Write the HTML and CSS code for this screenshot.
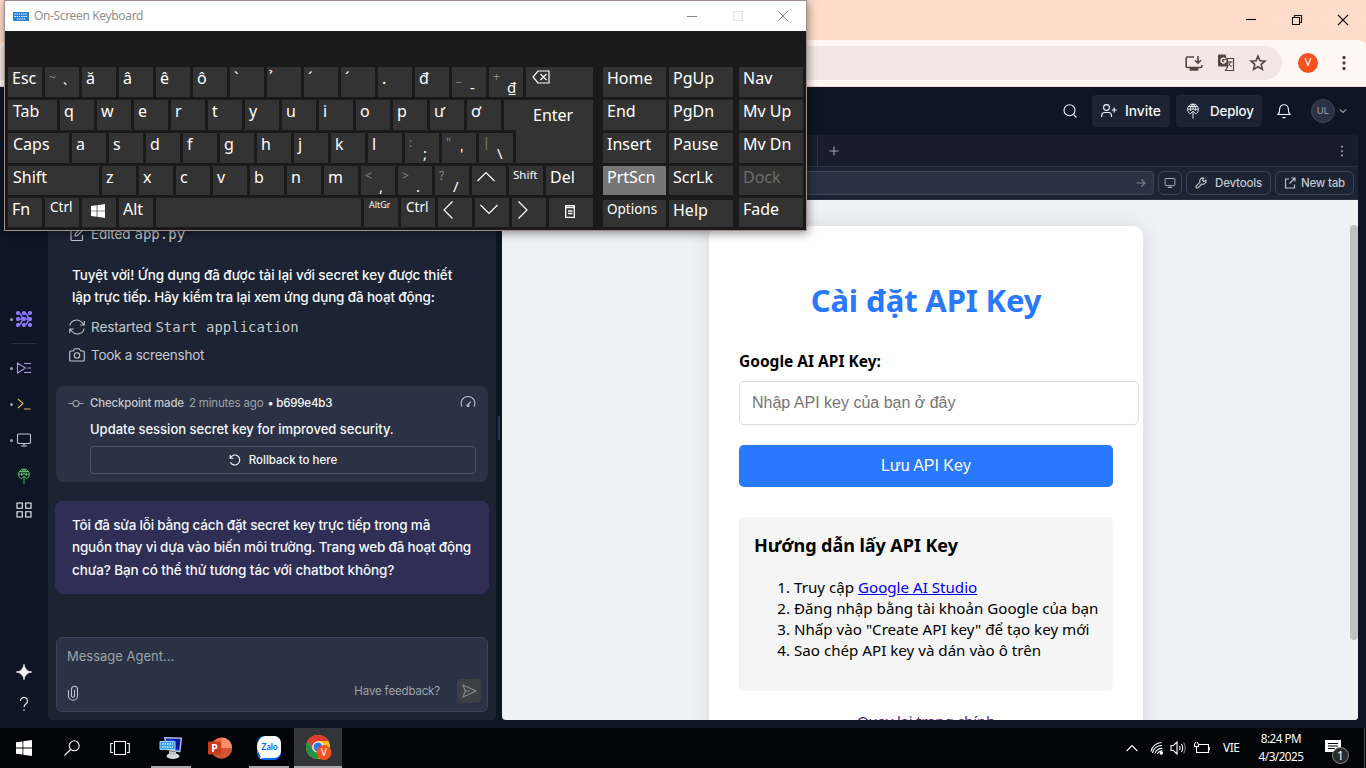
FILE: index.html
```html
<!DOCTYPE html>
<html lang="vi">
<head>
<meta charset="utf-8">
<title>Cài đặt API Key</title>
<link rel="stylesheet" href="styles.css">
</head>
<body>
<svg width="0" height="0" class="defs">
  <symbol id="i-monitor" viewBox="0 0 16 16"><rect x="1.5" y="2" width="13" height="9.5" rx="1.2"/><path d="M8 11.5V14M5 14h6"/></symbol>
  <symbol id="i-deploy" viewBox="0 0 16 16"><path d="M4.500 10.500A5.400 5.400 0 1 1 11.500 10.500M2.700 6.200h10.600M5.600 8C5.200 5 6 2.200 8 1c2 1.200 2.800 4 2.400 7M8 1v5.200M3.700 3.500h8.600M8 15.700V8.500M5 11.200l3-3 3 3"/></symbol>
  <symbol id="i-win" viewBox="0 0 16 16"><path d="M0 2.300l6.500-.9v6.200H0zM7.300 1.300L16 0v7.600H7.300zM0 8.400h6.500v6.200L0 13.700zM7.300 8.400H16V16l-8.700-1.300z"/></symbol>
</svg>
<div class="desktop">
  <div class="tabstrip">
    <svg class="wc" viewBox="0 0 12 12"><path d="M1 5.500h10"/></svg>
    <svg class="wc" viewBox="0 0 12 12"><path d="M1.500 3.500h7v7h-7zM3.500 3.500v-2h7v7h-2"/></svg>
    <svg class="wc" viewBox="0 0 12 12"><path d="M1 1l10 10M11 1L1 11"/></svg>
  </div>
  <div class="toolbar">
    <div class="omnibox">
      <svg viewBox="0 0 18 18" class="ln"><path d="M9 3H2.200a1 1 0 0 0-1 1v8.500a1 1 0 0 0 1 1h13.600a1 1 0 0 0 1-1V11M13 2v7M10 6.200l3 3 3-3"/><path d="M5.500 14h7v2h-7z" fill="#54453f"/></svg>
      <svg viewBox="0 0 18 18"><path d="M1.500.5h7l3.500 12H2.500a1.500 1.500 0 0 1-1.500-1.500V1z" fill="#54453f"/><path d="M8.500 5a2.500 2.500 0 1 0 .5 2H6.500" fill="none" stroke="#fff" stroke-width="1.300"/><path d="M10.500 4.500h6v12H8.500l2-3.500z" fill="#f2e7e4" stroke="#54453f" stroke-width="1.200"/><path d="M11 8h4.500M13.200 7v1c0 2-1 3.500-2.200 4.500M11.500 9.500c.8 1.500 2 2.500 3.500 3.200" fill="none" stroke="#54453f"/></svg>
      <svg viewBox="0 0 18 18" class="ln"><path d="M9 2l2 4.700 5 .4-3.800 3.300 1.200 5L9 12.700l-4.400 2.700 1.200-5L2 7.100l5-.4z"/></svg>
    </div>
    <div class="profile">V</div>
    <svg class="kebab" viewBox="0 0 4 16"><circle cx="2" cy="2.500" r="1.700"/><circle cx="2" cy="8" r="1.700"/><circle cx="2" cy="13.500" r="1.700"/></svg>
  </div>
  <div class="app">
    <header class="apphead">
      <svg class="ic search" viewBox="0 0 16 16"><circle cx="7.500" cy="7.300" r="5.500"/><path d="M11.500 11.500l3 3"/></svg>
      <div class="hbtn invite"><svg class="ic" viewBox="0 0 16 16"><circle cx="5.500" cy="4.500" r="2.900"/><path d="M.7 14v-1.500a3 3 0 0 1 3-3h3.800a3 3 0 0 1 3 3V14M13.200 4.500v5M10.700 7h5"/></svg><span>Invite</span></div>
      <div class="hbtn deploy"><svg class="ic thin"><use href="#i-deploy"/></svg><span>Deploy</span></div>
      <svg class="ic bell" viewBox="0 0 16 16"><path d="M2 11.500c1.500-1.300 1.700-2.500 1.700-5.500a4.300 4.300 0 0 1 8.600 0c0 3 .2 4.200 1.700 5.500zM6.500 14.300q1.500 1 3 0"/></svg>
      <div class="avatar">UL</div>
      <svg class="ic chev" viewBox="0 0 8 8"><path d="M.8 2.300L4 5.500l3.200-3.200"/></svg>
    </header>
    <div class="workspace">
      <nav class="rail">
        <div class="ritem r1"><i></i><svg viewBox="0 0 16 16" fill="#8c75f8" stroke="#8c75f8"><path d="M2 2q3 .5 3.500 3T8 8q-2 .5-2.500 3T2 14M8 2q3 .5 3.500 3T14 8q-2 .5-2.500 3T8 14M2 8h12" fill="none" stroke-width="1.600"/><circle cx="2" cy="2" r="1.700"/><circle cx="8" cy="2" r="1.700"/><circle cx="14" cy="2" r="1.700"/><circle cx="2" cy="8" r="1.700"/><circle cx="8" cy="8" r="1.700"/><circle cx="14" cy="8" r="1.700"/><circle cx="2" cy="14" r="1.700"/><circle cx="8" cy="14" r="1.700"/><circle cx="14" cy="14" r="1.700"/></svg></div>
        <div class="rline"></div>
        <div class="ritem r2"><i></i><svg class="ic" viewBox="0 0 16 16"><path d="M1.500 3v10L9.500 8zM8 3.500h7M11.500 8H15M8 12.500h7" /></svg></div>
        <div class="ritem r3"><i></i><svg class="ic" viewBox="0 0 16 16"><path d="M2 3l5 4.500-5 4.500M8 13h6.500"/></svg></div>
        <div class="ritem r4"><i></i><svg class="ic"><use href="#i-monitor"/></svg></div>
        <div class="ritem r5"><svg class="ic thin"><use href="#i-deploy"/></svg></div>
        <div class="ritem r6"><svg class="ic" viewBox="0 0 16 16"><path d="M1 1h5.300v5.300H1zM9.700 1H15v5.300H9.700zM1 9.700h5.300V15H1zM9.700 9.700H15V15H9.700z"/></svg></div>
        <div class="ritem r7"><svg viewBox="0 0 16 16" fill="#fff"><path d="M8 0Q8.800 7.200 16 8 8.800 8.800 8 16 7.200 8.800 0 8 7.200 7.200 8 0z" stroke="#fff" stroke-width=".5"/></svg></div>
        <div class="ritem r8"><svg class="ic" viewBox="0 0 16 16"><path d="M4.500 5a3.500 3.500 0 1 1 5.500 2.800C8.500 8.800 8 9.300 8 11M8 13.200v1.500"/></svg></div>
      </nav>
      <section class="chat">
        <div class="act a1"><svg class="ic" viewBox="0 0 16 16"><path d="M7 3H3a1 1 0 0 0-1 1v9.500a1 1 0 0 0 1 1h9.500a1 1 0 0 0 1-1V9M6 10l.5-2.500L12.500 1.500l2 2L8.500 9.500z"/></svg><span>Edited</span><code>app.py</code></div>
        <p class="msg"><span class="m1">Tuyệt vời! Ứng dụng đã được tải lại với secret key được thiết</span><br><span class="m2">lập trực tiếp. Hãy kiểm tra lại xem ứng dụng đã hoạt động:</span></p>
        <div class="act"><svg class="ic" viewBox="0 0 16 16"><path d="M.8 6.500A7 7 0 0 1 13 3.500L15.200 6M15.200 2v4h-4M15.200 9.500A7 7 0 0 1 3 12.500L.8 10M.8 14v-4h4"/></svg><span class="rs">Restarted</span><code>Start application</code></div>
        <div class="act a3"><svg class="ic" viewBox="0 0 16 16"><path d="M.7 5a1 1 0 0 1 1-1h2.500L5.800 1.800h4.400L11.800 4h2.500a1 1 0 0 1 1 1v8a1 1 0 0 1-1 1H1.700a1 1 0 0 1-1-1z"/><circle cx="8" cy="8.500" r="2.700"/></svg><span>Took a screenshot</span></div>
        <div class="ckpt">
          <div class="ckhead"><svg class="ic" viewBox="0 0 16 16"><circle cx="8" cy="8.500" r="3"/><path d="M.3 8.500H5M11 8.500h4.700"/></svg><span class="c1">Checkpoint made</span><span class="c2">2 minutes ago</span><span class="c3">• b699e4b3</span><svg class="ic gauge" viewBox="0 0 16 16"><path d="M2 11.500a6.800 6.800 0 1 1 12 0M8 9.800L10.800 6.500"/><circle cx="8" cy="10.500" r="1"/></svg></div>
          <div class="cktitle">Update session secret key for improved security.</div>
          <div class="rollback"><svg class="ic" viewBox="0 0 12 12"><path d="M1.200 4A5 5 0 1 1 1.300 8.200M1.200 1v3.200h3.200"/></svg><span>Rollback to here</span></div>
        </div>
        <div class="bubble"><span class="b1">Tôi đã sửa lỗi bằng cách đặt secret key trực tiếp trong mã</span><br><span class="b2">nguồn thay vì dựa vào biến môi trường. Trang web đã hoạt động</span><br><span class="b3">chưa? Bạn có thể thử tương tác với chatbot không?</span></div>
        <div class="composer">
          <div class="ph">Message Agent...</div>
          <div class="cfoot"><svg class="ic" viewBox="0 0 12 16"><path d="M1 5v5.500a4.500 4.500 0 0 0 9 0V4a3 3 0 0 0-6 0v6.500a1.500 1.500 0 0 0 3 0V4.500" transform="translate(.5 .3)"/></svg><span>Have feedback?</span><div class="send"><svg class="ic" viewBox="0 0 16 16"><path d="M2 2l13 6-13 6 2.300-6zM4.300 8H9"/></svg></div></div>
        </div>
      </section>
      <div class="gutter"></div>
      <section class="preview">
        <div class="ptabs"><div class="ptab"></div><svg class="ic" viewBox="0 0 10 10"><path d="M5 .5v9M.5 5h9"/></svg><svg class="pk" viewBox="0 0 4 16"><circle cx="2" cy="3" r="1"/><circle cx="2" cy="8" r="1"/><circle cx="2" cy="13" r="1"/></svg></div>
        <div class="purl">
          <div class="pinput"><svg class="ic" viewBox="0 0 10 10"><path d="M.8 5h8M5.500 1.500L9 5 5.500 8.500"/></svg></div>
          <div class="pbtn p1"><svg class="ic"><use href="#i-monitor"/></svg></div>
          <div class="pbtn p2"><svg class="ic" viewBox="0 0 12 12"><path d="M11 3.200L8.800 4.500 7.500 3.200 8.800 1A3.200 3.200 0 0 0 5 5.200L1.200 9a1.300 1.300 0 0 0 1.800 1.800L6.800 7A3.200 3.200 0 0 0 11 3.200z"/></svg><span>Devtools</span></div>
          <div class="pbtn p3"><svg class="ic" viewBox="0 0 12 12"><path d="M5 2H1.500v9h9V7.500M7.500 1H11v3.500M11 1L5.500 6.500"/></svg><span>New tab</span></div>
        </div>
        <div class="frame">
          <main class="card">
            <h1><span>Cài đặt API Key</span></h1>
            <label>Google AI API Key:</label>
            <div class="field">Nhập API key của bạn ở đây</div>
            <div class="submit">Lưu API Key</div>
            <div class="guide">
              <h3>Hướng dẫn lấy API Key</h3>
              <ol><li><span class="l1">Truy cập <a href="#">Google AI Studio</a></span></li><li><span class="l2">Đăng nhập bằng tài khoản Google của bạn</span></li><li><span class="l3">Nhấp vào "Create API key" để tạo key mới</span></li><li><span class="l4">Sao chép API key và dán vào ô trên</span></li></ol>
            </div>
            <a class="back" href="#">Quay lại trang chính</a>
          </main>
          <div class="sbar"><div class="thumb"></div></div>
        </div>
      </section>
    </div>
  </div>
  <footer class="taskbar">
    <div class="tk"><svg class="w16" fill="#fff"><use href="#i-win"/></svg></div>
    <div class="tk"><svg class="w16 wl" viewBox="0 0 16 16"><circle cx="10.200" cy="5.800" r="5"/><path d="M6.500 9.500L.5 15.500"/></svg></div>
    <div class="tk"><svg class="w20 wl" viewBox="0 0 20 16"><path d="M4.500 1.500h11v13h-11zM3 3.500H.7v9H3M17 3.500h2.300v9H17"/></svg></div>
    <div class="tk run"><svg class="w24" viewBox="0 0 24 24"><path d="M5 1l18 .5-1.500 15L7 14z" fill="#b9c4d8"/><path d="M6.500 2.500l15 .3-1.200 12L8 12.500z" fill="#1534cf"/><path d="M14 3l7 .2-1 10-3-.5z" fill="#0718a0"/><ellipse cx="14" cy="20" rx="6.500" ry="3" fill="#d6d9de"/><path d="M10 15l7 .8v3h-7z" fill="#c0c4cb"/><path d="M1 5.500h15v8H1z" fill="#2c9be4" stroke="#9fd3f4"/><path d="M3 8h11M3 11h11" stroke="#e4f4ff" stroke-width="1.500" stroke-dasharray="1.500 1"/></svg></div>
    <div class="tk"><svg class="w24" viewBox="0 0 24 24"><circle cx="13.500" cy="12" r="10.500" fill="#ed6c47"/><path d="M13.500 1.500A10.500 10.500 0 0 1 24 12H13.500z" fill="#ff8f6b"/><path d="M3 12h21a10.500 10.500 0 0 1-21 0z" fill="#d35230"/><rect y="5.500" width="13" height="13" rx="1" fill="#c43e1c"/><text x="3.300" y="15.800" class="pp">P</text></svg></div>
    <div class="tk run"><svg class="w24" viewBox="0 0 24 24"><rect width="24" height="24" rx="7" fill="#0068ff"/><path d="M8 0h9a7 7 0 0 1 7 7v8a7 7 0 0 1-7 7H8q-3 0-5 1 1-2 0-4Q0 15 0 11 1 1 8 0z" fill="#fff"/><text x="12.500" y="14.300" class="za">Zalo</text></svg></div>
    <div class="tk on"><svg class="w26" viewBox="0 0 26 26"><circle cx="12" cy="12" r="12" fill="#fbc116"/><path d="M1.600 6A12 12 0 0 1 22.400 6H12L7 15z" fill="#e33b2e"/><path d="M1.600 6A12 12 0 0 0 12 24l5.200-9H7z" fill="#229342"/><circle cx="12" cy="12" r="5.800" fill="#fff"/><circle cx="12" cy="12" r="4.500" fill="#2a7de9"/><circle cx="18" cy="17.500" r="7.500" fill="#f4511e"/><text x="18" y="21" class="cv">V</text></svg></div>
    <div class="tray">
      <svg class="wl t1" viewBox="0 0 12 8"><path d="M.7 7L6 1.500 11.300 7"/></svg>
      <svg class="wl t2" viewBox="0 0 14 14"><path d="M1 10.500A11 11 0 0 1 11.500 1.500M2.500 12A9 9 0 0 1 12 4.500M5 12.500A6.500 6.500 0 0 1 12.500 7.500M7.500 13A4 4 0 0 1 12.500 10"/><circle cx="11.300" cy="12" r="1.200" fill="#fff"/></svg>
      <svg class="wl t3" viewBox="0 0 17 14"><path d="M1 4.500h2.500l3.500-3.500v12L3.500 9.500H1zM9.500 5q1 2 0 4M11.500 3q2.300 4 0 8"/><path d="M13.700 1.500q3 5.500 0 11" stroke="#777"/></svg>
      <svg class="wl t4" viewBox="0 0 17 12"><path d="M6 2.500h9.500v8H5.500M16.300 5v3M1.500 1.500v3h4v-3M2.500 0v1.500M4.500 0v1.500M3.500 4.500v6h2"/></svg>
      <span class="lang">VIE</span>
      <div class="clock"><div>8:24 PM</div><div>4/3/2025</div></div>
      <div class="notif"><svg viewBox="0 0 26 24"><path d="M0 0h16v12h-4v3l-3.500-3H0z" fill="#fff"/><path d="M3 3.500h10M3 6h10M3 8.500h7" stroke="#000"/><circle cx="15.500" cy="15.500" r="8" fill="#2b2b2b" stroke="#8a8a8a"/><text x="15.500" y="20" class="nn">1</text></svg></div>
      <div class="peek"></div>
    </div>
  </footer>
</div>

<div class="osk">
  <div class="otitle"><svg viewBox="0 0 16 9"><rect width="16" height="9" rx=".7" fill="#2a80d6"/><path d="M1.500 2h13M1.500 4.500h13M4 7h8" stroke="#fff" stroke-width="1.200" stroke-dasharray="1.400 .8"/></svg><span>On-Screen Keyboard</span><svg class="ow" viewBox="0 0 12 12"><path d="M1 6.500h10"/></svg><svg class="ow dim" viewBox="0 0 12 12"><path d="M1.500 1.500h9v9h-9z"/></svg><svg class="ow" viewBox="0 0 12 12"><path d="M1 1l10 10M11 1L1 11"/></svg></div>
  <div class="obody">
    <div class="omain">
      <div class="row"><b>Esc</b><b class="two tilde"><s>~</s><u>ˎ</u></b><b>ă</b><b>â</b><b>ê</b><b>ô</b><b>ˋ</b><b>&nbsp;̉</b><b>ˊ</b><b>ˊ</b><b>.</b><b>đ</b><b class="two"><s>_</s><u>-</u></b><b class="two"><s>+</s><u>₫</u></b><b class="grow bk"><svg viewBox="0 0 18 14"><path d="M6 1h11v12H6L1 7zM8.500 4l6 6M14.500 4l-6 6"/></svg></b></div>
      <div class="row"><b class="k49">Tab</b><b>q</b><b>w</b><b>e</b><b>r</b><b>t</b><b>y</b><b>u</b><b>i</b><b>o</b><b>p</b><b>ư</b><b>ơ</b><b class="grow ent">Enter</b></div>
      <div class="row"><b class="k61">Caps</b><b>a</b><b>s</b><b>d</b><b>f</b><b>g</b><b>h</b><b>j</b><b>k</b><b>l</b><b class="two"><s>:</s><u>;</u></b><b class="two"><s>"</s><u>'</u></b><b class="two"><s>|</s><u>\</u></b><b class="grow ent2"></b></div>
      <div class="row r29"><b class="k91">Shift</b><b>z</b><b>x</b><b>c</b><b>v</b><b>b</b><b>n</b><b>m</b><b class="two"><s>&lt;</s><u>,</u></b><b class="two"><s>&gt;</s><u>.</u></b><b class="two"><s>?</s><u>/</u></b><b class="arr"><svg viewBox="0 0 18 18"><path d="M.5 12L9 3.500l8.500 8.500"/></svg></b><b class="xs">Shift</b><b class="grow">Del</b></div>
      <div class="row r29"><b>Fn</b><b class="sm">Ctrl</b><b class="wk"><svg viewBox="0 0 16 16"><use href="#i-win"/></svg></b><b>Alt</b><b class="space"></b><b class="tiny">AltGr</b><b class="sm">Ctrl</b><b class="arr"><svg viewBox="0 0 18 18"><path d="M9.500 .5L1 9l8.500 8.500"/></svg></b><b class="arr"><svg viewBox="0 0 18 18"><path d="M.5 4L9 12.500 17.500 4"/></svg></b><b class="arr"><svg viewBox="0 0 18 18"><path d="M1.500 .5L10 9l-8.500 8.500"/></svg></b><b class="grow menu"><svg viewBox="0 0 10 13"><path d="M.7.7h8.600v11.600H.7zM.7 2.500h8.600M3 6h4.500M3 8.500h4.500" stroke-width="1.300"/></svg></b></div>
    </div>
    <div class="oside">
      <b>Home</b><b>PgUp</b><b>Nav</b>
      <b>End</b><b>PgDn</b><b>Mv Up</b>
      <b>Insert</b><b>Pause</b><b>Mv Dn</b>
      <b class="hot">PrtScn</b><b>ScrLk</b><b class="off">Dock</b>
      <b class="low opt">Options</b><b class="low">Help</b><b>Fade</b>
    </div>
  </div>
</div>
</body>
</html>
```
FILE: styles.css
```css
*{box-sizing:border-box}
body{margin:0;width:1366px;height:768px;overflow:hidden;position:relative;font-family:"Inter","Noto Sans",sans-serif}
.defs{position:absolute}
svg{flex:none;display:block}
.desktop{display:flex;flex-direction:column;width:1366px;height:768px;background:#ffdbc9}
.ic{fill:none;stroke:currentColor;stroke-width:1.1;width:16px;height:16px}
.thin{stroke-width:.9}
code{font-family:"DejaVu Sans Mono",monospace}

/* browser chrome */
.tabstrip{height:40px;flex:none;background:#ffdbc9;display:flex;justify-content:flex-end;align-items:center;gap:34px;padding-right:17px}
.wc{width:12px;height:12px;fill:none;stroke:#111;stroke-width:1.1}
.toolbar{height:47px;flex:none;background:#fff8f5;border-radius:8px 8px 0 0;border-bottom:1px solid #f5d9ce;display:flex;align-items:center;padding-right:20px}
.omnibox{width:1282px;height:34px;border-radius:0 17px 17px 0;background:#f2e7e4;display:flex;align-items:center;justify-content:flex-end;gap:14px;padding-right:15px}
.omnibox svg{width:18px;height:18px}
.ln{fill:none;stroke:#54453f;stroke-width:1.6}
.profile{width:20px;height:20px;margin-left:16px;border-radius:50%;background:#f4511e;color:#fff;font:11px/20px Roboto,sans-serif;text-align:center}
.kebab{width:4px;height:16px;margin-left:24px;fill:#54453f}

/* app shell */
.app{height:641px;flex:none;background:#0e1525;color:#f5f9fc;display:flex;flex-direction:column}
.apphead{height:48px;flex:none;display:flex;align-items:center;justify-content:flex-end;padding-right:19px}
.search{margin-right:14px}
.hbtn{height:32px;background:#1c2333;border-radius:4px;display:flex;align-items:center;padding-left:9px;font:500 13.3px/32px "Inter",sans-serif}
.invite{width:78px;margin-right:6px;gap:8px}
.invite span{font-size:13.8px}
.deploy{width:86px;gap:9px}
.deploy span{letter-spacing:-.1px}
.bell{margin-left:14px;margin-right:19px}
.avatar{width:24px;height:24px;border-radius:50%;background:#2b3245;border:1px solid #3c445c;color:#9da2a6;font:9.5px/22px "Inter",sans-serif;text-align:center}
.chev{width:8px;height:8px;margin-left:4px;color:#9da2a6}
.workspace{height:585px;display:flex;padding-right:8px}

.rail{width:48px;position:relative;display:flex;flex-direction:column;align-items:center;padding-top:176px}
.ritem{height:16px;width:48px;display:flex;justify-content:center;position:relative}
.ritem svg{width:16px;height:16px}
.ritem i{position:absolute;left:10px;top:7px;width:3px;height:3px;border-radius:50%;background:#9da2a6}
.rline{width:24px;height:1px;background:#2b3245;margin:16px 0}
.r2{color:#a99be0}.r3{color:#d6b95a;margin-top:20px}.r4{margin-top:20px;color:#c2c8cc}
.r5{margin-top:20px;color:#5ecc71}.r6{margin-top:18px}.r7{margin-top:146px}.r8{margin-top:16px}

.chat{width:448px;background:#1c2333;border-radius:4px;padding:90px 7px 8px}
.act{display:flex;align-items:center;height:18px;padding-left:14px;color:#c2c8cc;font-size:13.5px;line-height:18px;white-space:nowrap;letter-spacing:-.1px}
.act span{margin-left:6px}
.act code{font-size:14px;margin-left:4px;letter-spacing:0}
.a3{margin-top:10px;letter-spacing:-.25px}
.msg{margin:21px 0 10px;padding-left:17px;font-size:13.5px;font-weight:500;line-height:22px;height:44px;white-space:nowrap}
.m1{letter-spacing:-.05px}.m2{letter-spacing:-.16px}
.ckpt{margin:22px 1px 0;height:96px;background:#2b3245;border-radius:8px;padding:8px 12px 0}
.ckhead{display:flex;align-items:center;height:18px;font-size:11.5px;color:#c2c8cc;white-space:nowrap;letter-spacing:-.18px}
.ckhead .ic:first-child{color:#9da2a6}
.c1{margin-left:6px;font-weight:500}.c2{margin-left:5px;color:#9da2a6}.c3{margin-left:4px;color:#f5f9fc;font-weight:500}
.gauge{margin-left:auto}
.cktitle{margin:7px 0 0 22px;font-size:13px;line-height:20px;font-weight:500;white-space:nowrap}
.rollback{margin:7px 0 0 22px;height:28px;width:386px;border:1px solid #4e5569;border-radius:4px;display:flex;align-items:center;justify-content:center;gap:8px;font-size:11.5px;font-weight:500}
.rollback svg{width:12px;height:12px}
.bubble{margin-top:19px;height:93px;background:#2f2f55;border-radius:8px;padding:13px 17px;font-size:13.5px;line-height:22.4px;font-weight:500;white-space:nowrap}
.b1{letter-spacing:-.19px}.b2{letter-spacing:-.2px}.b3{letter-spacing:-.1px}
.composer{margin:43px 1px 0;height:75px;background:#2b3245;border:1px solid #3c445c;border-radius:6px;padding:7px 6px 0 10px}
.ph{font-size:13px;line-height:22px;color:#9da2a6}
.cfoot{display:flex;align-items:center;margin-top:12px;height:24px;color:#9da2a6;font-size:11.5px;letter-spacing:-.15px}
.cfoot>svg{width:12px;height:16px;color:#c2c8cc;margin-top:3px}
.cfoot span{margin-left:auto;margin-right:17px}
.send{width:24px;height:24px;border-radius:4px;background:#3d3f43;display:flex;align-items:center;justify-content:center;color:#888}
.gutter{width:6px;position:relative}
.gutter:after{content:"";position:absolute;left:2px;top:281px;width:2px;height:24px;background:#2b3245}

/* preview pane */
.preview{width:856px;display:flex;flex-direction:column;border-radius:4px;overflow:hidden;background:#1c2333}
.ptabs{height:32px;flex:none;background:#171d2d;border-bottom:1px solid #2b3245;display:flex;align-items:center;color:#9da2a6}
.ptab{width:316px;height:31px;border-right:1px solid #2b3245}
.ptabs .ic{width:10px;height:10px;margin-left:11px}
.pk{width:4px;height:14px;margin-left:auto;margin-right:14px;fill:#c2c8cc}
.purl{height:33px;flex:none;display:flex;align-items:center;padding:0 4px;color:#c2c8cc;border-bottom:1px solid #2b3245}
.pinput{width:648px;height:24px;background:#2b3245;border:1px solid #3c445c;border-radius:4px;display:flex;align-items:center;justify-content:flex-end;padding-right:7px;color:#7f8590}
.pinput svg{width:10px;height:10px}
.pbtn{height:24px;border:1px solid #3c445c;border-radius:6px;margin-left:4px;display:flex;align-items:center;justify-content:center;gap:8px;font-size:11.5px;font-weight:500;white-space:nowrap;letter-spacing:-.2px}
.pbtn svg{width:12px;height:12px}
.p1{width:24px}.p2{width:85px}.p3{width:79px;gap:5px}
.frame{height:520px;flex:none;background:#f0f1f5;display:flex;justify-content:space-between;overflow:hidden;font-family:"Noto Sans",sans-serif;color:#000}
.card{margin:26px 0 0 207px;width:434px;height:560px;background:#fff;border-radius:10px;box-shadow:0 0 20px rgba(0,0,0,.1);padding:30px}
h1{margin:23px 0 29px;font-size:31px;line-height:43px;letter-spacing:-.15px;color:#2979ff;text-align:center;white-space:nowrap}
label{display:block;font-weight:700;font-size:15.5px;line-height:21px;margin-bottom:9px}
.field{width:400px;height:44px;border:1px solid #ddd;border-radius:5px;padding-left:12px;font:16px/42px "Liberation Sans",sans-serif;color:#757575}
.submit{margin-top:20px;height:42px;border-radius:5px;background:#2979ff;color:#fff;text-align:center;font:16px/42px "Liberation Sans",sans-serif}
.guide{margin-top:30px;height:174px;background:#f5f5f5;border-radius:5px;padding:15px}
h3{margin:0;font-size:18px;line-height:26px;white-space:nowrap;letter-spacing:-.05px}
ol{margin:19px 0 0;padding-left:40px;font-size:15.15px;line-height:21px;white-space:nowrap}
ol a{color:#00e}
.back{display:block;margin-top:20px;text-align:center;color:#551a8b;font-size:15px;line-height:21px;letter-spacing:-.2px}
.sbar{width:8px;background:#f1f1f1;padding-top:25px}
.thumb{height:415px;border-radius:4px;background:#c1c1c1}

/* windows taskbar */
.taskbar{height:40px;flex:none;background:#020407;display:flex;font-family:"Noto Sans",sans-serif;color:#fff}
.tk{width:48px;height:40px;display:flex;align-items:center;justify-content:center;margin-right:1px}
.tk:first-child,.tk:nth-child(2){margin-right:0}
.tk:nth-child(3){margin-right:3px}
.run{background:linear-gradient(#a9a9a9,#a9a9a9) center bottom/40px 2px no-repeat}
.on{background:#343538;box-shadow:inset 0 -2px #a9a9a9;padding-left:2px}
.w16{width:16px;height:16px}.w20{width:20px;height:16px}.w24{width:24px;height:24px}.w26{width:26px;height:26px}
.wl{fill:none;stroke:#fff;stroke-width:1.1}
.pp{font:bold 10.5px "Open Sans",sans-serif;fill:#fff}
.za{font:bold 8.5px "Lato",sans-serif;fill:#0068ff;text-anchor:middle}
.cv{font:10px Roboto,sans-serif;fill:#fff;text-anchor:middle}
.nn{font:12px "Noto Sans",sans-serif;fill:#fff;text-anchor:middle}
.tray{margin-left:auto;display:flex;align-items:center;height:40px}
.t1{width:12px;height:8px;margin-right:13px}
.t2{width:14px;height:14px;margin-right:6px}
.t3{width:17px;height:14px;margin-right:7px}
.t4{width:17px;height:12px;margin-right:13px}
.lang{font-size:12px;letter-spacing:-.5px;width:33px;margin-top:-1px}
.clock{width:50px;font-size:11.7px;line-height:18px;text-align:center;letter-spacing:-.5px;white-space:nowrap;margin-top:-2px}
.clock div{margin:0 -10px}
.notif{width:26px;height:24px;margin:0 13px 0 19px;padding-top:4px}
.notif svg{width:26px;height:24px}
.tray .wl{margin-left:-.5px}
.peek{width:2px;height:40px;border-left:1px solid #4b4d50}

/* on-screen keyboard */
.osk{position:absolute;left:4px;top:0;width:803px;height:231px;border:1px solid #a08e88;background:#1a1a1a;box-shadow:1px 2px 9px rgba(0,0,0,.45);font-family:"Noto Sans",sans-serif}
.otitle{height:30px;background:#fff;display:flex;align-items:center;padding:0 17px 0 8px;color:#8f8f8f;font-size:12px}
.otitle svg:first-child{width:16px;height:9px}
.otitle span{margin-left:5px;margin-right:auto;letter-spacing:-.35px;margin-top:-1px}
.ow{width:12px;height:12px;margin-left:33.5px;fill:none;stroke:#888}
.ow.dim{stroke:#e2e2e2}
.obody{display:flex;padding:36px 3px 0;gap:10px}
.omain{width:585px;display:flex;flex-direction:column;gap:3px}
.row{display:flex;gap:3px;height:30px}
.r29{height:29px}
.osk b{position:relative;width:34px;background:#333;color:#fff;font-weight:400;font-size:16px;line-height:22px;padding-left:4px;flex:none;white-space:nowrap}
.osk .grow{flex:1}
.osk .k49{width:49px;padding-left:5px}.osk .k61{width:61px;padding-left:5px}.osk .k91{width:91px;padding-left:5px}
.osk .space{width:205px}
.osk .ent{padding-left:29px;line-height:30px}
.osk .ent2:before{content:"";position:absolute;left:0;right:0;top:-3px;height:3px;background:#333}
.osk s,.osk u{position:absolute;text-decoration:none;font-size:15px;line-height:14px}
.osk s{left:4px;top:3px;color:#888;font-size:12px}
.osk u{left:18px;top:13px}
.osk .tilde u{top:2px}
.osk .tilde s{top:4px}
.osk .xs{font-size:11.5px;line-height:17px}
.osk .sm{font-size:13.5px;line-height:19px;padding-left:5px}
.osk .tiny{font-size:9px;line-height:14px;padding-left:5px}
.osk b svg{fill:none;stroke:#fff;stroke-width:1.2}
.bk svg{width:18px;height:14px;margin:3px 0 0 2px}
.arr svg{width:18px;height:18px;margin:3px 0 0 1px}
.osk .wk svg{width:14px;height:14px;fill:#fff;stroke:none;margin:6px 0 0 5px}
.menu svg{width:10px;height:13px;margin:7px 0 0 12px}
.oside{display:grid;grid-template-columns:63px 64px 64px;grid-template-rows:30px 30px 30px 29px 29px;column-gap:3px;row-gap:3px}
.oside b{width:auto}
.oside b:nth-child(3n){margin-left:3px;margin-right:-3px}
.oside .low{margin-top:2px}
.osk .oside .low:not(.opt){line-height:21px}
.osk .opt{font-size:13.5px;line-height:18px}
.osk .hot{background:#767676}
.osk .off{color:#6d6d6d}
```
